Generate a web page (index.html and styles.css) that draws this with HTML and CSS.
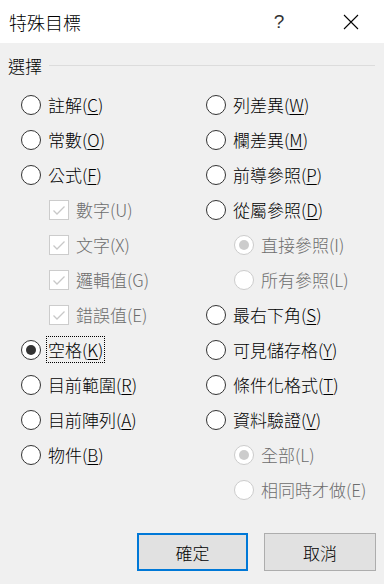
FILE: index.html
```html
<!DOCTYPE html>
<html lang="zh-Hant">
<head>
<meta charset="utf-8">
<title>特殊目標</title>
<link rel="stylesheet" href="styles.css">
</head>
<body>
<div class="dialog">
  <div class="titlebar">
    <span class="title">特殊目標</span>
    <span class="help">?</span>
    <span class="close"><svg width="16" height="16" viewBox="0 0 16 16"><path d="M1 1L15 15M15 1L1 15" stroke="#000" stroke-width="1.1" fill="none"/></svg></span>
  </div>
  <div class="content">
    <div class="group-head"><span class="group-title">選擇</span><span class="group-line"></span></div>
    <div class="columns">
      <div class="col">
        <div class="row"><span class="radio"></span><span class="label">註解(<u>C</u>)</span></div>
        <div class="row"><span class="radio"></span><span class="label">常數(<u>O</u>)</span></div>
        <div class="row"><span class="radio"></span><span class="label">公式(<u>F</u>)</span></div>
        <div class="row sub disabled"><span class="check"><svg width="18" height="18" viewBox="0 0 18 18"><path d="M3.5 9.5L7 13L14.5 5.5" stroke="#c8c8c8" stroke-width="1.3" fill="none"/></svg></span><span class="label">數字(U)</span></div>
        <div class="row sub disabled"><span class="check"><svg width="18" height="18" viewBox="0 0 18 18"><path d="M3.5 9.5L7 13L14.5 5.5" stroke="#c8c8c8" stroke-width="1.3" fill="none"/></svg></span><span class="label">文字(X)</span></div>
        <div class="row sub disabled"><span class="check"><svg width="18" height="18" viewBox="0 0 18 18"><path d="M3.5 9.5L7 13L14.5 5.5" stroke="#c8c8c8" stroke-width="1.3" fill="none"/></svg></span><span class="label">邏輯值(G)</span></div>
        <div class="row sub disabled"><span class="check"><svg width="18" height="18" viewBox="0 0 18 18"><path d="M3.5 9.5L7 13L14.5 5.5" stroke="#c8c8c8" stroke-width="1.3" fill="none"/></svg></span><span class="label">錯誤值(E)</span></div>
        <div class="row"><span class="radio checked"></span><span class="label focus">空格(<u>K</u>)</span></div>
        <div class="row"><span class="radio"></span><span class="label">目前範圍(<u>R</u>)</span></div>
        <div class="row"><span class="radio"></span><span class="label">目前陣列(<u>A</u>)</span></div>
        <div class="row"><span class="radio"></span><span class="label">物件(<u>B</u>)</span></div>
      </div>
      <div class="col">
        <div class="row"><span class="radio"></span><span class="label">列差異(<u>W</u>)</span></div>
        <div class="row"><span class="radio"></span><span class="label">欄差異(<u>M</u>)</span></div>
        <div class="row"><span class="radio"></span><span class="label">前導參照(<u>P</u>)</span></div>
        <div class="row"><span class="radio"></span><span class="label">從屬參照(<u>D</u>)</span></div>
        <div class="row sub disabled"><span class="radio checked"></span><span class="label">直接參照(I)</span></div>
        <div class="row sub disabled"><span class="radio"></span><span class="label">所有參照(L)</span></div>
        <div class="row"><span class="radio"></span><span class="label">最右下角(<u>S</u>)</span></div>
        <div class="row"><span class="radio"></span><span class="label">可見儲存格(<u>Y</u>)</span></div>
        <div class="row"><span class="radio"></span><span class="label">條件化格式(<u>T</u>)</span></div>
        <div class="row"><span class="radio"></span><span class="label">資料驗證(<u>V</u>)</span></div>
        <div class="row sub disabled"><span class="radio checked"></span><span class="label">全部(L)</span></div>
        <div class="row sub disabled"><span class="radio"></span><span class="label">相同時才做(E)</span></div>
      </div>
    </div>
    <div class="buttons">
      <button class="btn default">確定</button>
      <button class="btn">取消</button>
    </div>
  </div>
</div>
</body>
</html>
```
FILE: styles.css
```css
* { box-sizing: border-box; }
html, body {
  margin: 0;
  padding: 0;
  width: 384px;
  height: 584px;
  overflow: hidden;
  background: #f0f0f0;
  font-family: "Noto Sans CJK TC", "Noto Sans", sans-serif;
  font-weight: 300;
  color: #000;
}
.dialog {
  width: 384px;
  height: 584px;
  display: flex;
  flex-direction: column;
}
.titlebar {
  height: 43px;
  background: #fff;
  display: flex;
  align-items: center;
  padding-left: 9px;
}
.title {
  font-size: 18px;
  line-height: 1;
  flex: 1;
}
.help {
  font-family: "Liberation Sans", sans-serif;
  font-size: 19px;
  line-height: 1;
  width: 20px;
  margin-right: 54px;
  text-align: center;
  color: #333;
}
.close {
  width: 16px;
  height: 16px;
  margin-right: 25px;
  display: flex;
}
.content {
  flex: 1;
  padding: 12px 8px 0 8px;
  display: flex;
  flex-direction: column;
}
.group-head {
  height: 21px;
  display: flex;
  align-items: center;
}
.group-title {
  font-size: 17px;
  line-height: 1;
  margin-right: 7px;
}
.group-line {
  flex: 1;
  height: 1px;
  background: #dcdcdc;
  margin-right: 1px;
}
.columns {
  display: grid;
  grid-template-columns: 185px 1fr;
  margin-top: 11px;
  padding-left: 13px;
}
.col {
  display: flex;
  flex-direction: column;
}
.row {
  height: 35px;
  display: flex;
  align-items: center;
  gap: 7px;
}
.row.sub {
  padding-left: 28px;
}
.label {
  font-size: 17px;
  line-height: 25px;
  white-space: nowrap;
  padding: 0 1px;
  border: 1px solid transparent;
  margin-left: -2px;
}
.label u {
  text-decoration-thickness: 1px;
  text-underline-offset: 2px;
}
.label.focus {
  border: 1px dotted #000;
}
.disabled .label {
  color: #6d6d6d;
}
.radio {
  width: 20px;
  height: 20px;
  flex: none;
  border: 1.5px solid #333;
  border-radius: 50%;
  background: #fff;
  display: flex;
  align-items: center;
  justify-content: center;
}
.radio.checked::after {
  content: "";
  width: 10px;
  height: 10px;
  border-radius: 50%;
  background: #333;
}
.disabled .radio {
  border-color: #cccccc;
}
.disabled .radio.checked::after {
  background: #cccccc;
}
.check {
  width: 20px;
  height: 20px;
  flex: none;
  border: 1px solid #cccccc;
  background: #fff;
  display: flex;
  align-items: center;
  justify-content: center;
}
.buttons {
  display: flex;
  justify-content: flex-end;
  gap: 16px;
  margin-top: 26px;
}
.btn {
  width: 112px;
  height: 38px;
  background: #e1e1e1;
  border: 1px solid #adadad;
  font-family: "Noto Sans CJK TC", sans-serif;
  font-weight: 300;
  font-size: 17px;
  color: #000;
  padding: 0;
}
.btn.default {
  width: 111px;
  border: 2px solid #0078d7;
}
```
